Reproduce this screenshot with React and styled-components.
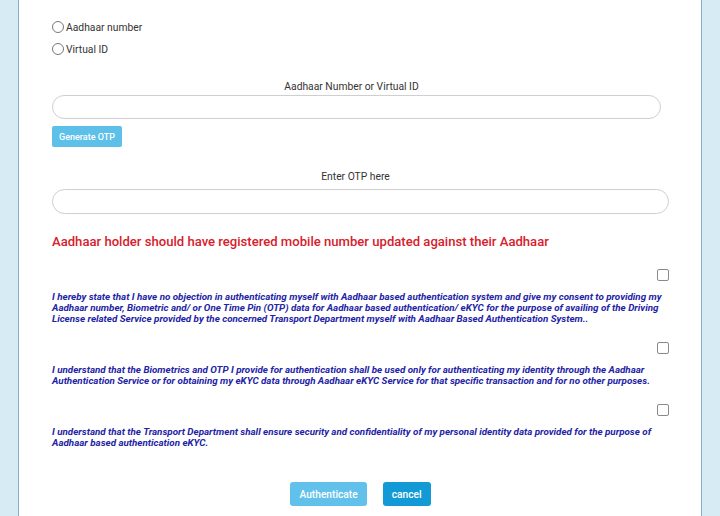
import React from 'react';
import styled, { createGlobalStyle } from 'styled-components';

const consents = [
  {
    id: 1,
    text: 'I hereby state that I have no objection in authenticating myself with Aadhaar based authentication system and give my consent to providing my Aadhaar number, Biometric and/ or One Time Pin (OTP) data for Aadhaar based authentication/ eKYC for the purpose of availing of the Driving License related Service provided by the concerned Transport Department myself with Aadhaar Based Authentication System..'
  },
  {
    id: 2,
    text: 'I understand that the Biometrics and OTP I provide for authentication shall be used only for authenticating my identity through the Aadhaar Authentication Service or for obtaining my eKYC data through Aadhaar eKYC Service for that specific transaction and for no other purposes.'
  },
  {
    id: 3,
    text: 'I understand that the Transport Department shall ensure security and confidentiality of my personal identity data provided for the purpose of Aadhaar based authentication eKYC.'
  },
];

const App = () => {
  return (
    <Page>
      <GlobalStyle />
      <Panel>
        <RadioGroup>
          <RadioRow>
            <Radio type="radio" name="idType" />
            Aadhaar number
          </RadioRow>
          <RadioRow>
            <Radio type="radio" name="idType" />
            Virtual ID
          </RadioRow>
        </RadioGroup>

        <Field $narrow>
          <FieldLabel>Aadhaar Number or Virtual ID</FieldLabel>
          <TextInput type="text" />
        </Field>
        <SmallButton>Generate OTP</SmallButton>

        <Field $top={23}>
          <FieldLabel>Enter OTP here</FieldLabel>
          <TextInput type="text" $tall />
        </Field>

        <Warning>Aadhaar holder should have registered mobile number updated against their Aadhaar</Warning>

        {consents.map((c) => (
          <Consent key={c.id}>
            <CheckRow><Check type="checkbox" /></CheckRow>
            <ConsentText>{c.text}</ConsentText>
          </Consent>
        ))}

        <Actions>
          <ActionButton $light>Authenticate</ActionButton>
          <ActionButton>cancel</ActionButton>
        </Actions>
      </Panel>
    </Page>
  );
};

export default App;


const GlobalStyle = createGlobalStyle`
  html, body {
    margin: 0;
    padding: 0;
  }
  body {
    font-family: Roboto, "Liberation Sans", Arial, sans-serif;
    background: #d7ebf5;
  }
  * {
    box-sizing: border-box;
  }
`;

const Page = styled.div`
  height: 516px;
  overflow: hidden;
  background: #d7ebf5;
  padding: 0 18px;
`;

const Panel = styled.div`
  height: 100%;
  background: #fff;
  border-left: 1px solid #7fb0c6;
  border-right: 1px solid #7fb0c6;
  padding: 19px 32px 0 33px;
  display: flex;
  flex-direction: column;
`;

const RadioGroup = styled.div`
  display: flex;
  flex-direction: column;
  gap: 6px;
`;

const RadioRow = styled.label`
  display: flex;
  align-items: center;
  height: 16px;
  font-size: 10.3px;
  color: #333;
`;

const Radio = styled.input`
  appearance: none;
  width: 12px;
  height: 12px;
  margin: 0 2px 0 0;
  border: 1px solid #777;
  border-radius: 50%;
  background: #fff;
`;

const Field = styled.div`
  display: flex;
  flex-direction: column;
  align-items: center;
  margin-top: ${(p) => p.$top ?? 23}px;
  margin-right: ${(p) => (p.$narrow ? 8 : 0)}px;
`;

const FieldLabel = styled.div`
  font-size: 10.3px;
  line-height: 14px;
  color: #333;
  margin-bottom: 1px;
  margin-left: -10px;
`;

const TextInput = styled.input`
  width: 100%;
  height: ${(p) => (p.$tall ? 25 : 24)}px;
  margin-top: ${(p) => (p.$tall ? 4 : 0)}px;
  border: 1px solid #cfcfcf;
  border-radius: 13px;
  background: #fff;
  outline: none;
`;

const SmallButton = styled.button`
  align-self: flex-start;
  margin-top: 7px;
  height: 21px;
  padding: 0 7px;
  border: none;
  border-radius: 2px;
  background: #5dc0e9;
  color: #fff;
  font-family: Roboto, sans-serif;
  font-size: 9px;
  font-weight: 500;
`;

const Warning = styled.div`
  margin-top: 19px;
  font-size: 13.1px;
  line-height: 18px;
  font-weight: 500;
  color: #d7202b;
`;

const Consent = styled.div`
  margin-top: 18px;
  display: flex;
  flex-direction: column;
  gap: 10px;
`;

const CheckRow = styled.div`
  display: flex;
  justify-content: flex-end;
`;

const Check = styled.input`
  appearance: none;
  width: 12px;
  height: 12px;
  margin: 0;
  border: 1px solid #8a8a8a;
  border-radius: 2px;
  background: #fff;
`;

const ConsentText = styled.p`
  margin: 0;
  font-size: 9.8px;
  line-height: 11px;
  font-style: italic;
  font-weight: 700;
  color: #2323a6;
`;

const Actions = styled.div`
  margin-top: 34px;
  display: flex;
  justify-content: center;
  gap: 16px;
`;

const ActionButton = styled.button`
  height: 24px;
  padding: 0 9px;
  border: none;
  border-radius: 3px;
  background: ${(p) => (p.$light ? '#62c1ea' : '#129ad6')};
  color: #fff;
  font-family: Roboto, sans-serif;
  font-size: 10.2px;
  font-weight: 500;
`;
